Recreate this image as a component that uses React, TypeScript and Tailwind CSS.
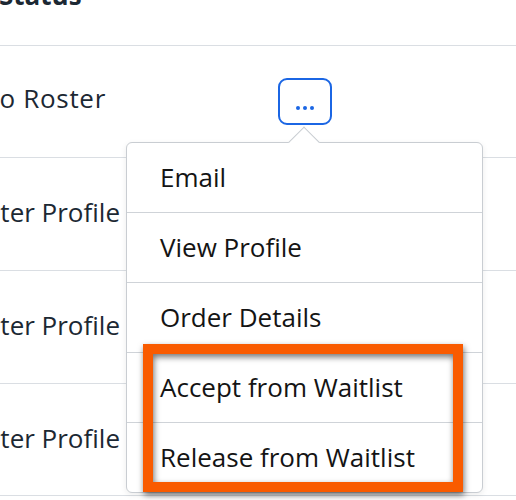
import React from "react";

const font = { fontFamily: '"Open Sans", "Noto Sans", sans-serif' };

function Row({ h, children }: { h: string; children: React.ReactNode }) {
  return (
    <div className={`flex items-center border-b border-[#dadee3] ${h}`}>{children}</div>
  );
}

export default function App() {
  const items = ["Email", "View Profile", "Order Details", "Accept from Waitlist", "Release from Waitlist"];
  return (
    <div
      className="relative w-[516px] h-[500px] overflow-hidden bg-white text-[26px] text-[#1c2833]"
      style={font}
    >
      {/* header */}
      <div className="h-[46px] border-b border-[#dadee3] overflow-hidden">
        <div className="-mt-[18px] -ml-[1px] font-bold leading-none whitespace-nowrap">Status</div>
      </div>
      <Row h="h-[112px]">
        <div className="w-[121px] shrink-0 overflow-hidden flex justify-end whitespace-nowrap pr-[15px] pb-[6px] tracking-[0.7px]">
          Added to Roster
        </div>
        <button className="ml-[157px] w-[54px] h-[47px] rounded-[9px] border-2 border-[#1b66e4] bg-white flex items-end justify-center pb-[13px] gap-[2.7px]">
          <span className="w-[4px] h-[4px] rounded-full bg-[#1b66e4]" />
          <span className="w-[4px] h-[4px] rounded-full bg-[#1b66e4]" />
          <span className="w-[4px] h-[4px] rounded-full bg-[#1b66e4]" />
        </button>
      </Row>
      {["h-[113px]", "h-[113px]", "h-[112px]"].map((h, i) => (
        <Row key={i} h={h}>
          <div className="w-[121px] shrink-0 overflow-hidden flex justify-end whitespace-nowrap pr-[1px] pb-[3px]">
            Roster Profile
          </div>
        </Row>
      ))}

      {/* dropdown menu */}
      <div className="absolute left-[126px] top-[142px] w-[357px] rounded-[6px] border border-[#c9cdd2] bg-white shadow-[0_2px_6px_rgba(0,0,0,0.08)] text-[#141414]">
        <div className="absolute left-[166px] top-[-12px] w-[22px] h-[22px] rotate-45 bg-white border-l border-t border-[#c9cdd2]" />
        <div className="relative flex flex-col">
          {items.map((t, i) => (
            <div
              key={t}
              className={`flex items-center pl-[33px] whitespace-nowrap ${
                i < items.length - 1 ? "h-[70px] border-b border-[#cfd3d8]" : "h-[69px]"
              }`}
            >
              {t}
            </div>
          ))}
        </div>
      </div>

      {/* highlight annotation */}
      <div className="absolute left-[143px] top-[344px] w-[320px] h-[148px] border-[10px] border-[#f95b00] [filter:drop-shadow(1px_3px_3px_rgba(0,0,0,0.55))]" />
    </div>
  );
}
